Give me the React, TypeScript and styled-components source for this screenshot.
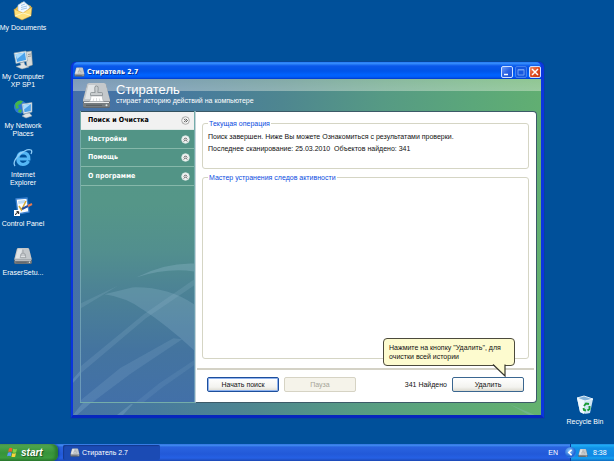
import React from "react";
import styled, { createGlobalStyle, css } from "styled-components";

const sans = `"Liberation Sans", Arial, sans-serif`;
const tahoma = `"DejaVu Sans Condensed", Tahoma, sans-serif`;

const GlobalStyle = createGlobalStyle`
  * { box-sizing: border-box; }
  body { margin: 0; font-family: ${sans}; font-size: 7px; line-height: 8px; color: #111; }
  button { font: inherit; color: inherit; cursor: pointer; }
`;

const Screen = styled.div`
  display: flex;
  flex-direction: column;
  min-height: 100vh;
  background: #00509a;
`;

const Desktop = styled.main`
  position: relative;
  flex: 1;
  display: flex;
  justify-content: space-between;
`;

const IconColumn = styled.div<{ $end?: boolean }>`
  display: flex;
  flex-direction: column;
  justify-content: ${p => (p.$end ? "flex-end" : "flex-start")};
  width: ${p => (p.$end ? 58 : 46)}px;
  padding-top: 1px;
`;

const Shortcut = styled.button`
  display: flex;
  flex-direction: column;
  align-items: center;
  gap: 3px;
  height: 49px;
  padding: 0;
  border: 0;
  background: none;
  color: #fff;
  white-space: pre;
  text-align: center;
  svg { width: 20px; height: 20px; flex: none; }
`;

const Window = styled.section`
  position: absolute;
  inset: 62px 70px 26px 71px;
  display: flex;
  flex-direction: column;
  border: solid #0a35dd;
  border-width: 0 3px 3px 2px;
  border-bottom-color: #0626bd;
  border-radius: 5px 5px 0 0;
  box-shadow: 0 0 0 1px #06469a;
  background: #0a35dd;
`;

const TitleBar = styled.header`
  display: flex;
  align-items: center;
  gap: 2px;
  height: 17px;
  padding: 2px 0 0 1px;
  border-radius: 5px 5px 0 0;
  background: linear-gradient(#1c70f0 0, #3a94ff 1px, #0a58ea 4px, #0054e8 9px, #0063ff 13px, #005cf8 15px, #0038cc 17px);
  > svg { width: 11px; height: 10px; }
`;

const Title = styled.h1`
  flex: 1;
  margin: 0;
  font: bold 7px/10px ${tahoma};
  color: #fff;
  text-shadow: 1px 1px 0 #0a3296;
`;

const Caption = styled.button<{ $kind: "normal" | "off" | "close" }>`
  width: 12px;
  height: 12px;
  padding: 0;
  border: 1px solid ${p => (p.$kind === "off" ? "#4280ee" : "#cfe0ff")};
  border-radius: 2px;
  background: ${p =>
    p.$kind === "close"
      ? "linear-gradient(135deg, #f0906c, #e04a20 50%, #c63a14)"
      : p.$kind === "off"
      ? "#1658e0"
      : "linear-gradient(135deg, #6f9cf6, #2a62e4 50%, #1d50d0)"};
  svg { display: block; width: 10px; height: 10px; }
`;

const Body = styled.div`
  position: relative;
  flex: 1;
  display: flex;
  flex-direction: column;
  min-height: 0;
  padding: 0 4px 12px 7px;
  background:
    linear-gradient(rgba(255, 255, 220, 0.3), rgba(255, 255, 240, 0.36)) top / 100% 12px no-repeat,
    linear-gradient(96deg, #456fa8 0, #477a9e 22%, #4e8690 42%, #569a84 62%, #5ba77a 80%, #64b26e 100%);
`;

const Swooshes = styled.svg`
  position: absolute;
  inset: 0;
  width: 100%;
  height: 100%;
`;

const Brand = styled.div`
  position: relative;
  display: flex;
  align-items: center;
  gap: 4px;
  height: 32px;
  padding-left: 1px;
  > svg { width: 31px; height: 27px; }
`;

const BrandText = styled.div`
  padding-bottom: 2px;
  color: #fff;
  strong { display: block; font-weight: normal; font-size: 13px; line-height: 13px; }
  span { display: block; font-size: 7px; line-height: 9px; }
`;

const Columns = styled.div`
  position: relative;
  flex: 1;
  display: flex;
  min-height: 0;
`;

const Sidebar = styled.nav`
  position: relative;
  width: 115px;
  border: 1px solid rgba(150, 195, 205, 0.5);
  border-top: 0;
  background: linear-gradient(#539687 0, #559688 32%, #528f8e 48%, #4c8295 62%, #44749f 82%, #4270a8 100%);
`;

const Menu = styled.div`
  position: relative;
  display: grid;
  grid-template-rows: repeat(4, 1fr);
  height: 75px;
`;

const MenuItem = styled.button<{ $active?: boolean }>`
  display: flex;
  align-items: center;
  justify-content: space-between;
  padding: 1px 4px 0 7px;
  border: 0;
  border-bottom: 1px solid #86b8aa;
  background: #529486;
  color: #fff;
  font: bold 7px/9px ${tahoma};
  svg { width: 9px; height: 9px; }
  ${p => p.$active && css`
    background: #f1f1f1;
    border-top: 1px solid #33515f;
    border-bottom-color: #dde8e5;
    color: #000;
  `}
`;

const Panel = styled.div`
  flex: 1;
  display: flex;
  flex-direction: column;
  min-width: 0;
  padding: 7px 2px 0 1px;
  border: 1px solid #3c5a68;
  border-left-color: #c5d4da;
  border-radius: 0 4px 4px 0;
  background: #fff;
`;

const Group = styled.fieldset<{ $grow?: boolean }>`
  min-width: 0;
  margin: 0 5px 4px;
  height: 50px;
  padding: 3px 5px;
  border: 1px solid #d5d5c4;
  border-radius: 3px;
  ${p => p.$grow && css`
    flex: 1;
    height: auto;
    margin-bottom: 9px;
  `}
  legend { padding: 0 1px; margin: 0; color: #0a4be0; line-height: 9px; }
  p { margin: 0; line-height: 12px; white-space: pre-wrap; }
`;

const Footer = styled.footer`
  display: flex;
  align-items: center;
  gap: 5px;
  height: 34px;
  padding: 0 10px 3px;
  border-top: 2px solid #d4d2c6;
`;

const PushButton = styled.button<{ $focus?: boolean }>`
  display: block;
  width: 72px;
  height: 15px;
  padding: 0;
  border: 1px solid ${p => (p.$focus ? "#1d4f9c" : "#3a6690")};
  border-radius: 2px;
  background: linear-gradient(#fff, #f3f3ef 70%, #dcdad0);
  box-shadow: ${p => (p.$focus ? "inset 0 0 0 1px #8fb2ee" : "none")};
  &:disabled { border-color: #d6d3c4; background: #f5f3ea; color: #a6a598; }
`;

const Found = styled.output`
  margin-left: auto;
`;

const DeleteSlot = styled.div`
  position: relative;
`;

const Balloon = styled.div`
  position: absolute;
  right: 9px;
  bottom: calc(100% + 11px);
  width: 132px;
  padding: 4px 5px;
  border: 1px solid #4c4a3c;
  border-radius: 4px;
  background: #fdfbcf;
  line-height: 9px;
  white-space: nowrap;
  svg { position: absolute; right: 8px; top: calc(100% - 1px); width: 14px; height: 13px; }
`;

const Taskbar = styled.footer`
  display: flex;
  height: 17px;
  align-items: stretch;
  background: linear-gradient(#2a66d8 0, #4391f2 1px, #2a64e0 3px, #2259d8 10px, #2560e4 14px, #1c48b4 17px);
  color: #fff;
`;

const StartButton = styled.button`
  display: flex;
  align-items: center;
  gap: 3px;
  width: 58px;
  padding: 0 0 0 7px;
  border: 0;
  border-radius: 0 6px 6px 0;
  background: linear-gradient(#5da75d 0, #49a349 3px, #37933a 9px, #3c9c3e 14px, #2a752c 17px);
  box-shadow: inset -3px 0 3px #2a7a2e, 1px 0 2px #123a96;
  color: #fff;
  font: italic bold 10px/12px ${sans};
  text-shadow: 1px 1px 1px #1d4f1f;
  svg { width: 11px; height: 11px; }
`;

const TaskButton = styled.button`
  display: flex;
  align-items: center;
  gap: 2px;
  width: 97px;
  margin: 1px auto 1px 5px;
  padding: 0 7px;
  border: 0;
  border-radius: 2px;
  background: #1b4bb4;
  box-shadow: inset 1px 1px 1px #143a90;
  color: #fff;
  svg { width: 10px; height: 9px; }
`;

const Language = styled.button`
  padding: 0 12px 0 4px;
  border: 0;
  background: none;
  color: #fff;
`;

const Tray = styled.div`
  display: flex;
  align-items: center;
  gap: 2px;
  width: 44px;
  border-left: 1px solid #0b3c9c;
  background: linear-gradient(#1c7edc 0, #20b0f6 1px, #1190e6 4px, #0f88e4 12px, #16a0f2 14px, #0e6cc0 17px);
  > svg { width: 10px; height: 10px; }
  time { margin-left: 3px; }
`;

const Expand = styled.button`
  flex: none;
  width: 11px;
  height: 11px;
  margin-left: -6px;
  padding: 0;
  border: 0;
  border-radius: 50%;
  background: radial-gradient(circle at 40% 35%, #8ccafa, #1c62d6 60%, #6db4f4 100%);
  svg { display: block; width: 11px; height: 11px; }
`;

const Drive = ({ brush }: { brush?: boolean }) => (
  <svg viewBox="0 0 31 27" aria-hidden="true">
    <path d="M2 19 6 3Q6.500 1.500 8 1.500H23Q24.500 1.500 25 3L29 19V24Q29 26 27 26H4Q2 26 2 24Z" fill="#4e555c" />
    <path d="M2 18 6 2.500Q6.500 1 8 1H23Q24.500 1 25 2.500L29 18V19.500H2Z" fill="#c4c8cb" />
    <path d="M4 17 7.500 3H14L12 17Z" fill="#e1e4e6" />
    <path d="M2 20.500H29V24Q29 25.500 27 25.500H4Q2 25.500 2 24Z" fill="#767c80" />
    <path d="M3 20.500H28" stroke="#eeeeee" />
    <path d="M5 23.300H21" stroke="#4d5256" strokeWidth=".8" />
    <circle cx="25.500" cy="23.200" r="1" fill="#dfe5e3" />
    {brush ? (
      <>
        <path d="M15.500 4Q17.800 4 17.200 7L16.800 10.500H20.500Q21.500 10.500 21.500 11.500V13.500H9.500V11.500Q9.500 10.500 10.500 10.500H14.200L13.800 7Q13.200 4 15.500 4Z" fill="#c9cdcf" stroke="#7f868a" strokeWidth=".7" />
        <path d="M10 14H21.300Q21.300 17 22.500 19.500H8.500Q10 17 10 14Z" fill="#fff" stroke="#999fa2" strokeWidth=".5" />
        <path d="M12.800 16.500 12 19.500M15.500 16V19.500M18.300 16.500 19 19.500" stroke="#b7bbbd" strokeWidth=".5" />
      </>
    ) : (
      <path d="M15.500 4V9M11 12H20M13 9.500H18L20 16H11Z" fill="#dfe2e4" stroke="#858b90" strokeWidth=".9" />
    )}
  </svg>
);

const Documents = () => (
  <svg viewBox="0 0 20 20" aria-hidden="true">
    <path d="M2 8 9 1 18 5 17 14 8 18 2 15Z" fill="#f4bf3e" />
    <path d="M5 4 11 .5 17 6 13 13 5 11Z" fill="#f4faff" stroke="#8cb7df" strokeWidth=".6" />
    <path d="M8 4.500 12 3M8 6.500 14 5M8 8.500 14 7" stroke="#8bbbe8" strokeWidth=".8" />
    <path d="M1 8 10 12 19 6 18 15 9 19 2 15.500Z" fill="#ffe07a" stroke="#cd9325" strokeWidth=".5" />
    <path d="M2 15 10 12 18 14.500" fill="none" stroke="#fff6c4" />
  </svg>
);

const Computer = () => (
  <svg viewBox="0 0 20 20" aria-hidden="true">
    <path d="M12 2 18.500 1 19.500 15 14 17Z" fill="#d9dbd8" stroke="#8f9695" strokeWidth=".5" />
    <path d="M15 4.500 18 4M15 6.500 18 6" stroke="#80888a" strokeWidth=".8" />
    <path d="M1 3 13 1 14.500 11 3 13.500Z" fill="#e9eeef" stroke="#8aa4b2" strokeWidth=".6" />
    <path d="M2.500 4.200 12 2.500 13 10 4 12Z" fill="#4aa3ec" />
    <path d="M2.500 4.200 12 2.500 4 9Z" fill="#a7dcff" />
    <path d="M7 13 11 12 12 15 16 17 9 19 3 16.500 8 15Z" fill="#dfe3e4" stroke="#98a4aa" strokeWidth=".5" />
  </svg>
);

const Network = () => (
  <svg viewBox="0 0 20 20" aria-hidden="true">
    <circle cx="7.500" cy="8" r="6.500" fill="#2d78d4" />
    <path d="M2 5Q5 0 10 2L8 5 5 6 6 9 3 10ZM6 10 9 11 8 14 5 13Z" fill="#45b649" />
    <path d="M9 5 19 3.500 19 13 10.500 15Z" fill="#e4eaee" stroke="#8da4b4" strokeWidth=".6" />
    <path d="M10.300 6 17.900 5 17.800 12 11.500 13.300Z" fill="#4aa0e8" />
    <path d="M10.300 6 17.900 5 11 10.500Z" fill="#a9dcff" />
    <path d="M13 14.500 16.500 14 19 17 13 19 9 17Z" fill="#dfe4e5" stroke="#97a3a9" strokeWidth=".5" />
  </svg>
);

const Explorer = () => (
  <svg viewBox="0 0 20 20" aria-hidden="true">
    <path d="M15.500 13Q13.500 16.500 10 16.500 4.800 16 4.800 10.500 5 5 10.300 4.700 15.700 5 15.800 11H5.500" fill="none" stroke="#55b7f5" strokeWidth="3.200" />
    <path d="M5 8Q6 4.500 10.300 4" fill="none" stroke="#b9e6ff" strokeWidth="1" />
    <path d="M2 18Q-1 14 6 7 14 0 18 2 19.500 3 18 6" fill="none" stroke="#8fcdf7" strokeWidth="1.300" />
  </svg>
);

const ControlPanel = () => (
  <svg viewBox="0 0 20 20" aria-hidden="true">
    <path d="M3 2 14 1 16 15 5 17Z" fill="#f8fbff" stroke="#3c82d0" strokeWidth="1.300" />
    <path d="M5 4 12 3 12.500 6 5.500 7Z" fill="#bddcf8" />
    <path d="M6 9 8.500 13 13 4" fill="none" stroke="#d8aa33" strokeWidth="1.500" />
    <path d="M9 12 16 8.500" stroke="#254c9c" strokeWidth="2" />
    <path d="M15 9 19 7" stroke="#e8794e" strokeWidth="2" />
    <path d="M1 13H7V19H1Z" fill="#fff" />
    <path d="M2.500 18Q2.500 16 5 15.500M3.500 14.700H5.700V17" fill="none" stroke="#111" strokeWidth="1" />
  </svg>
);

const RecycleBin = () => (
  <svg viewBox="0 0 20 20" aria-hidden="true">
    <path d="M2 3 18 4 15 18Q9 20 5 17Z" fill="#cfe6f5" />
    <path d="M2 3 9 5 9 19 5 17Z" fill="#eef8fe" />
    <path d="M2 3 9 1 18 4 10 6Z" fill="#82b3da" stroke="#f4fbff" strokeWidth=".9" />
    <path d="M9 11 11 8.500 14 9M14.500 11 14.500 14 12.500 15.500M11 15.500 9 15 8.500 13" fill="none" stroke="#199b35" strokeWidth="1.900" />
  </svg>
);

const Flag = () => (
  <svg viewBox="0 0 12 12" aria-hidden="true">
    <path d="M2.200 1.500Q4 .3 6 1.500L5.200 5.300Q3.500 4.300 1.300 5.300Z" fill="#f0602c" />
    <path d="M6.700 1.900Q8.800 3 11 1.800L10 5.700Q8 6.800 6 5.700Z" fill="#8bd243" />
    <path d="M1 6.200Q3.200 5.200 5 6.300L4.100 10.100Q2.300 9 .1 10.100Z" fill="#5c9cf5" />
    <path d="M5.700 6.700Q7.800 7.700 9.800 6.600L8.900 10.500Q7 11.500 4.800 10.500Z" fill="#fbd33c" />
  </svg>
);

const Chevron = ({ side }: { side?: boolean }) => (
  <svg viewBox="0 0 9 9" aria-hidden="true">
    <circle cx="4.500" cy="4.500" r="3.800" fill="#f3f3f3" stroke={side ? "#999" : "#d9e8e3"} strokeWidth=".8" />
    <path
      d={side ? "M3 2.800 4.700 4.500 3 6.200M4.800 2.800 6.500 4.500 4.800 6.200" : "M2.800 4.500 4.500 2.800 6.200 4.500M2.800 6.500 4.500 4.800 6.200 6.500"}
      fill="none"
      stroke="#444"
      strokeWidth=".9"
    />
  </svg>
);

const shortcuts = [
  { label: "My Documents", icon: <Documents /> },
  { label: "My Computer\nXP SP1", icon: <Computer /> },
  { label: "My Network\nPlaces", icon: <Network /> },
  { label: "Internet\nExplorer", icon: <Explorer /> },
  { label: "Control Panel", icon: <ControlPanel /> },
  { label: "EraserSetu...", icon: <Drive /> },
];

const sections = ["Поиск и Очистка", "Настройки", "Помощь", "О программе"];

export default function App() {
  return (
    <Screen>
      <GlobalStyle />
      <Desktop>
        <IconColumn>
          {shortcuts.map(s => (
            <Shortcut key={s.label}>{s.icon}{s.label}</Shortcut>
          ))}
        </IconColumn>
        <IconColumn $end>
          <Shortcut><RecycleBin />Recycle Bin</Shortcut>
        </IconColumn>

        <Window>
          <TitleBar>
            <Drive />
            <Title>Стиратель 2.7</Title>
            <Caption $kind="normal" aria-label="Свернуть">
              <svg viewBox="0 0 10 10"><path d="M2 7.500H6" stroke="#fff" strokeWidth="1.500" /></svg>
            </Caption>
            <Caption $kind="off" aria-label="Развернуть" disabled>
              <svg viewBox="0 0 10 10"><path d="M2 2.500H8V8H2ZM2 3H8" fill="none" stroke="#6d9df2" /></svg>
            </Caption>
            <Caption $kind="close" aria-label="Закрыть">
              <svg viewBox="0 0 10 10"><path d="M2 2 8 8M8 2 2 8" stroke="#fff" strokeWidth="1.500" /></svg>
            </Caption>
          </TitleBar>
          <Body>
            <Swooshes viewBox="0 0 468 336" preserveAspectRatio="none" aria-hidden="true">
              <g fill="#9cc4dc" opacity=".24">
                <path d="M0 300 8 291V295L0 304ZM8 326 14 320 20 322 4 336H0ZM44 336 58 325H60L50 336Z" />
                <path d="M436 325 462 336H456Z" />
              </g>
            </Swooshes>
            <Brand>
              <Drive brush />
              <BrandText>
                <strong>Стиратель</strong>
                <span>стирает историю действий на компьютере</span>
              </BrandText>
            </Brand>
            <Columns>
              <Sidebar>
                <Swooshes viewBox="0 0 115 292" preserveAspectRatio="none" aria-hidden="true">
                  <g fill="#a8cce0">
                    <path d="M56 167Q86 152 115 153V161Q88 157 56 167Z" opacity=".25" />
                    <path d="M52 177Q88 176 115 194V240Q86 214 64 200Q46 187 24 184Z" opacity=".2" />
                    <path d="M0 193 38 175 0 198ZM0 256 64 204 115 169V175L66 208 0 263Z" opacity=".15" />
                    <path d="M0 290 40 258 94 228 103 229 50 264 12 292H0Z" opacity=".14" />
                    <path d="M56 292 80 273 115 250V255L82 278 64 292Z" opacity=".1" />
                  </g>
                </Swooshes>
                <Menu>
                  {sections.map((s, i) => (
                    <MenuItem key={s} $active={i === 0}>{s}<Chevron side={i === 0} /></MenuItem>
                  ))}
                </Menu>
              </Sidebar>
              <Panel>
                <Group>
                  <legend>Текущая операция</legend>
                  <p>Поиск завершен. Ниже Вы можете Ознакомиться с результатами проверки.</p>
                  <p>Последнее сканирование: 25.03.2010  Объектов найдено: 341</p>
                </Group>
                <Group $grow>
                  <legend>Мастер устранения следов активности</legend>
                </Group>
                <Footer>
                  <PushButton $focus>Начать поиск</PushButton>
                  <PushButton disabled>Пауза</PushButton>
                  <Found>341 Найдено</Found>
                  <DeleteSlot>
                    <PushButton aria-describedby="delete-hint">Удалить</PushButton>
                    <Balloon id="delete-hint" role="tooltip">
                      Нажмите на кнопку "Удалить", для<br />очистки всей истории
                      <svg viewBox="0 0 14 13" aria-hidden="true">
                        <path d="M1 0 13 12V0Z" fill="#fdfbcf" />
                        <path d="M1 .5 13 12V.5" fill="none" stroke="#38372d" strokeWidth="1.200" />
                      </svg>
                    </Balloon>
                  </DeleteSlot>
                </Footer>
              </Panel>
            </Columns>
          </Body>
        </Window>
      </Desktop>

      <Taskbar>
        <StartButton><Flag />start</StartButton>
        <TaskButton><Drive />Стиратель 2.7</TaskButton>
        <Language>EN</Language>
        <Tray>
          <Expand aria-label="Show hidden icons">
            <svg viewBox="0 0 10 10"><path d="M6 2.500 3.500 5 6 7.500" fill="none" stroke="#fff" strokeWidth="1.500" /></svg>
          </Expand>
          <Drive />
          <time>8:38</time>
        </Tray>
      </Taskbar>
    </Screen>
  );
}
